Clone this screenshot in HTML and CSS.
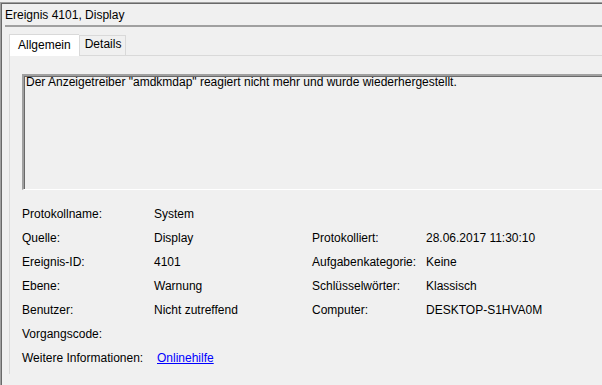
FILE: index.html
```html
<!DOCTYPE html>
<html lang="de">
<head>
    <meta charset="UTF-8">
    <title>Ereignis 4101, Display</title>
    <link rel="stylesheet" href="styles.css">
</head>
<body>
    <div class="frame">
        <!-- Kopfzeile -->
        <div class="caption">Ereignis 4101, Display</div>
        <div class="separator"></div>

        <!-- Reiter -->
        <div class="tabs">
            <div class="tab active">Allgemein</div>
            <div class="tab">Details</div>
        </div>

        <div class="page">
            <div class="message">Der Anzeigetreiber "amdkmdap" reagiert nicht mehr und wurde wiederhergestellt.</div>

            <div class="props">
                <span>Protokollname:</span><span>System</span><span></span><span></span>
                <span>Quelle:</span><span>Display</span><span>Protokolliert:</span><span>28.06.2017 11:30:10</span>
                <span>Ereignis-ID:</span><span>4101</span><span>Aufgabenkategorie:</span><span>Keine</span>
                <span>Ebene:</span><span>Warnung</span><span>Schlüsselwörter:</span><span>Klassisch</span>
                <span>Benutzer:</span><span>Nicht zutreffend</span><span>Computer:</span><span>DESKTOP-S1HVA0M</span>
                <span>Vorgangscode:</span><span></span><span></span><span></span>
                <span>Weitere Informationen:</span><span><a class="help" href="#">Onlinehilfe</a></span><span></span><span></span>
            </div>
        </div>
    </div>
</body>
</html>
```

FILE: styles.css
```css
/* Grundlayout */
body {
    margin: 0;
    background: #f0f0f0;
    font-family: "Liberation Sans", Arial, sans-serif;
    font-size: 12px;
    color: #000;
    overflow: hidden;
}

.frame {
    margin-top: 2px;
    height: 383px;
    border-top: 1px solid #a0a0a0;
    border-left: 1px solid #a0a0a0;
    box-shadow: inset 1px 1px 0 #696969;
}

.caption {
    padding: 4px 0 0 4px;
    height: 18px;
    line-height: 16px;
}

.separator {
    margin-left: 4px;
    border-top: 2px solid #a0a0a0;
}

/* Reiter */
.tabs {
    display: flex;
    align-items: flex-end;
    margin: 6px 0 0 8px;
    height: 22px;
}

.tab {
    height: 19px;
    padding: 0 4px 0 5px;
    line-height: 16px;
    border: 1px solid #d9d9d9;
    border-bottom: none;
    background: #f0f0f0;
}

.tab.active {
    height: 21px;
    padding: 0 8px;
    line-height: 20px;
    background: #fff;
    border-right: none;
    margin-bottom: -1px;
    position: relative;
    z-index: 1;
}

.page {
    margin-left: 8px;
    border-top: 1px solid #d9d9d9;
    border-left: 1px solid #d9d9d9;
    padding: 18px 0 0 12px;
}

.message {
    height: 113px;
    padding-left: 2px;
    line-height: 12px;
    border-top: 2px solid #a0a0a0;
    border-left: 2px solid #a0a0a0;
    border-bottom: 1px solid #fff;
    box-shadow: inset 1px 1px 0 #696969;
}

/* Eigenschaften */
.props {
    display: grid;
    grid-template-columns: 132px 158px 114px auto;
    grid-auto-rows: 24px;
    margin-top: 16px;
    line-height: 16px;
}

.help {
    margin-left: 3px;
    color: #0000ff;
}
```
